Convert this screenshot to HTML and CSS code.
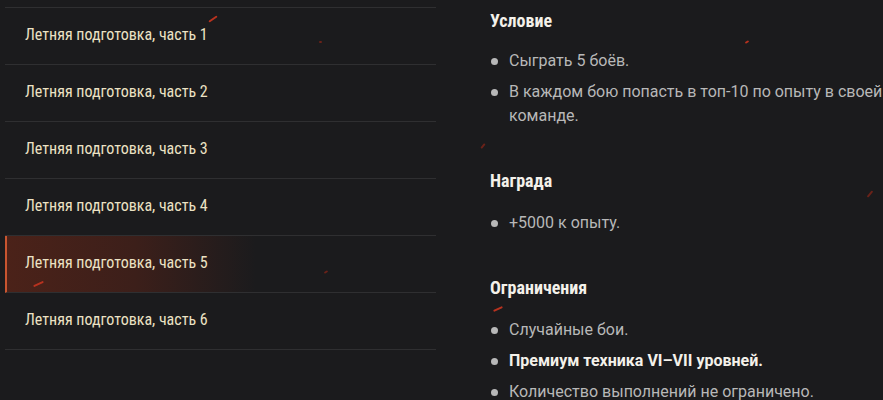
FILE: index.html
```html
<!DOCTYPE html>
<html lang="ru">
<head>
  <meta charset="UTF-8">
  <title>Летняя подготовка</title>
  <link rel="stylesheet" href="styles.css">
</head>
<body>
<div class="page">
  <ul class="stages">
    <li class="stage">Летняя подготовка, часть 1</li>
    <li class="stage">Летняя подготовка, часть 2</li>
    <li class="stage">Летняя подготовка, часть 3</li>
    <li class="stage">Летняя подготовка, часть 4</li>
    <li class="stage active">Летняя подготовка, часть 5</li>
    <li class="stage">Летняя подготовка, часть 6</li>
  </ul>
  <div class="details">
    <h3>Условие</h3>
    <ul class="bullets first">
      <li>Сыграть 5 боёв.</li>
      <li>В каждом бою попасть в топ-10 по опыту в своей команде.</li>
    </ul>
    <h3>Награда</h3>
    <ul class="bullets">
      <li>+5000 к опыту.</li>
    </ul>
    <h3>Ограничения</h3>
    <ul class="bullets">
      <li>Случайные бои.</li>
      <li class="strong">Премиум техника VI–VII уровней.</li>
      <li>Количество выполнений не ограничено.</li>
    </ul>
  </div>

  <!-- floating sparks -->
  <span class="spark" style="left:208px;top:18px;width:10px;transform:rotate(-35deg)"></span>
  <span class="spark dim" style="left:319px;top:41px;width:3px"></span>
  <span class="spark" style="left:33px;top:283px;width:11px;transform:rotate(-25deg)"></span>
  <span class="spark dim" style="left:324px;top:271px;width:4px;transform:rotate(-30deg)"></span>
  <span class="spark" style="left:745px;top:41px;width:4px;transform:rotate(-30deg)"></span>
  <span class="spark" style="left:493px;top:308px;width:10px;transform:rotate(-25deg)"></span>
  <span class="spark dim" style="left:866px;top:193px;width:8px;transform:rotate(-50deg)"></span>
  <span class="spark dim" style="left:480px;top:145px;width:6px;transform:rotate(-50deg)"></span>
</div>
</body>
</html>
```
FILE: styles.css
```css
* { box-sizing: border-box; }
body {
  margin: 0;
  background: #1b1b1d;
  font-family: Roboto, 'Liberation Sans', sans-serif;
  overflow: hidden;
}
.page {
  position: relative;
  display: flex;
  width: 883px;
  height: 400px;
  padding: 7px 0 0 5px;
}
.stages {
  list-style: none;
  margin: 0;
  padding: 0;
  width: 431px;
  flex-shrink: 0;
  border-top: 1px solid #2f2f31;
}
.stage {
  height: 57px;
  display: flex;
  align-items: center;
  padding: 0 0 3px 20px;
  border-bottom: 1px solid #2f2f31;
  color: #ece2c4;
  font-family: 'Roboto Condensed', 'DejaVu Sans Condensed', 'Liberation Sans Narrow', Roboto, sans-serif;
  font-size: 16px;
}
.stage.active {
  border-left: 2px solid #c85530;
  padding-left: 18px;
  background: linear-gradient(90deg, #4b2219 0%, #3c1f1a 30%, rgba(27,27,29,0) 58%);
}
.details {
  padding-left: 54px;
  margin-top: -7px;
}
.details h3 {
  margin: 8px 0 0;
  color: #f4f1ea;
  font-family: 'Roboto Condensed', 'DejaVu Sans Condensed', 'Liberation Sans Narrow', Roboto, sans-serif;
  font-weight: bold;
  font-size: 18px;
  line-height: 22px;
}
.details h3:first-child {
  margin-top: 10px;
}
.bullets {
  list-style: none;
  margin: 19px 0 42px;
  padding: 0;
}
.bullets.first {
  margin-top: 17px;
}
.bullets li {
  position: relative;
  padding-left: 19px;
  margin-bottom: 7px;
  color: #b8b8b8;
  font-size: 16px;
  line-height: 24px;
}
.bullets li::before {
  content: "";
  position: absolute;
  left: 1px;
  top: 9px;
  width: 7px;
  height: 7px;
  border-radius: 50%;
  background: #b8b8b8;
}
.bullets li.strong {
  color: #f4f1ea;
  font-weight: bold;
}
.spark {
  position: absolute;
  height: 2px;
  border-radius: 1px;
  background: #b8321f;
}
.spark.dim {
  background: #6a2219;
}
```
